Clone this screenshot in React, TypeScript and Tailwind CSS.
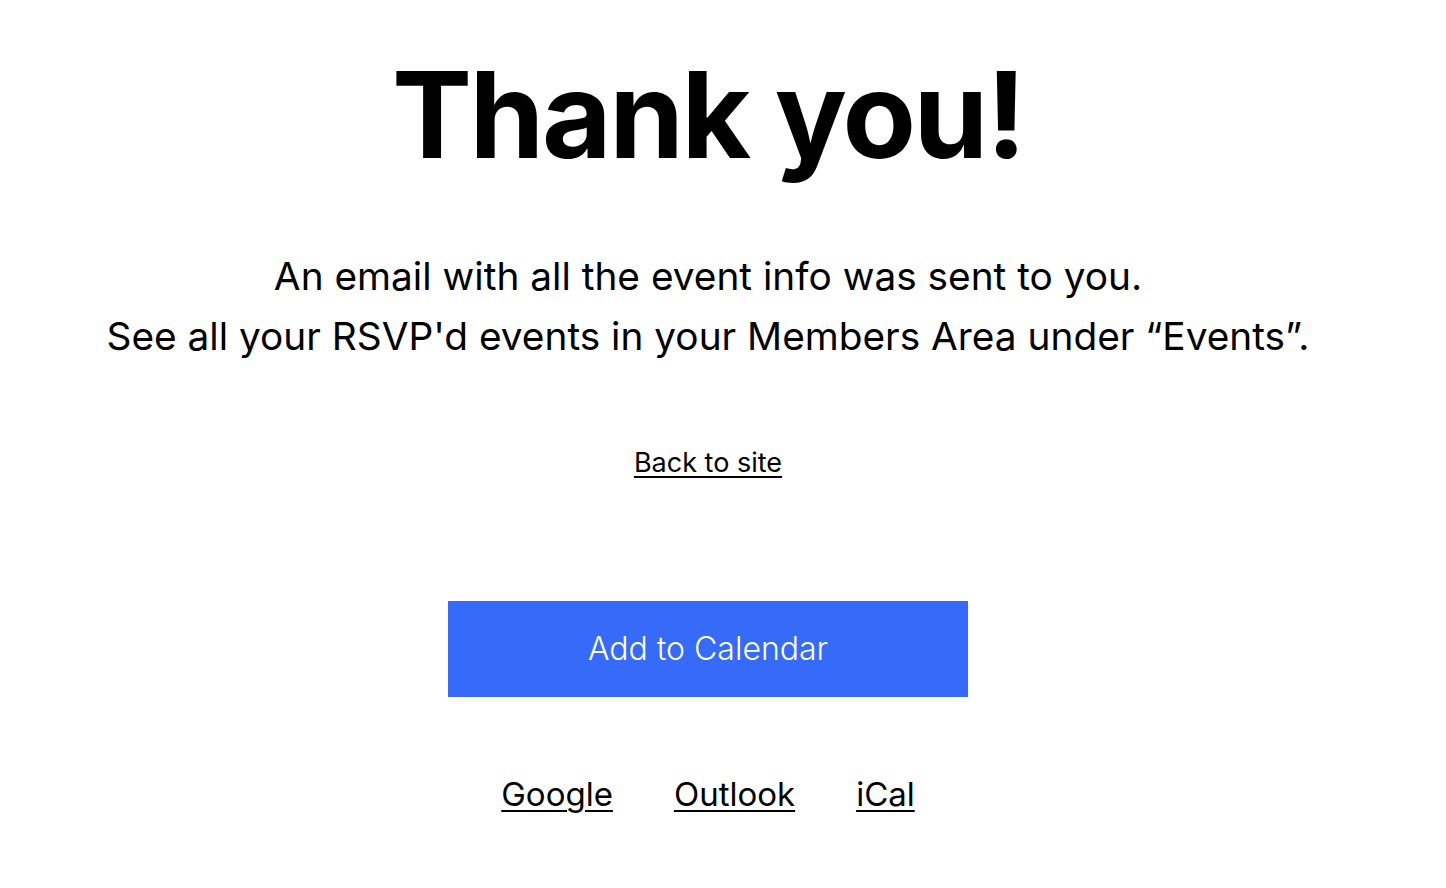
import React from 'react';

const calendarLinks = ['Google', 'Outlook', 'iCal'];

const App = () => {
  return (
    <div className="min-h-screen bg-white text-black font-['Inter','Noto_Sans',sans-serif]">
      <div className="w-[1416px] flex flex-col items-center">
        {/* Title */}
        <h1 className="mt-[45px] text-[120px] leading-[140px] font-bold tracking-[-0.02em]">Thank you!</h1>

        {/* Message */}
        <div className="mt-[61px] text-center text-[38.8px] leading-[60px] font-normal">
          <p>An email with all the event info was sent to you.</p>
          <p>See all your RSVP'd events in your Members Area under “Events”.</p>
        </div>

        <a href="#" className="mt-[79px] text-[27px] leading-[36px] underline decoration-2 underline-offset-[4px]">
          Back to site
        </a>

        <button className="mt-[120px] w-[520px] h-[96px] bg-[#366AF8] text-white text-[32px] font-light">
          Add to Calendar
        </button>

        <div className="mt-[76px] flex items-center gap-[61px] text-[33px] leading-[42px]">
          {calendarLinks.map((label) => (
            <a key={label} href="#" className="underline decoration-2 underline-offset-[4px]">
              {label}
            </a>
          ))}
        </div>
      </div>
    </div>
  );
};

export default App;
